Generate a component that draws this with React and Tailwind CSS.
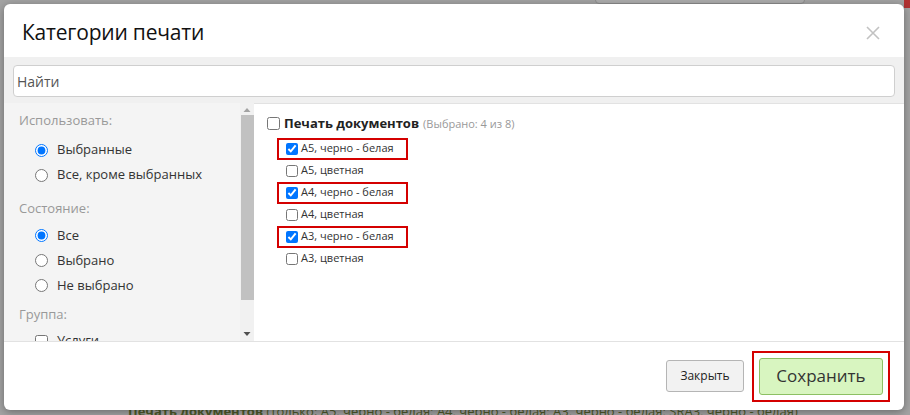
import React from "react";

const font = { fontFamily: '"Open Sans", "Noto Sans", sans-serif' };

function Radio({ checked, label }) {
  return (
    <label className="flex h-[25px] items-center gap-[9px] pl-[16px] text-[13px] text-[#333]">
      <input type="radio" defaultChecked={checked} className="m-0 h-[13px] w-[13px] accent-[#0075ff]" />
      <span>{label}</span>
    </label>
  );
}

function Item({ checked, label, marked }) {
  return (
    <div
      className={`flex h-[22px] w-[131px] items-center gap-[3px] text-[11px] text-[#333] ${
        marked ? "border-2 border-[#d40000] pl-[7px]" : "border-2 border-transparent pl-[7px]"
      }`}
    >
      <input type="checkbox" defaultChecked={checked} className="m-0 h-[12px] w-[12px] accent-[#0075ff]" />
      <span>{label}</span>
    </div>
  );
}

export default function App() {
  return (
    <div className="relative h-[415px] w-[910px] overflow-hidden bg-[#a3a3a3]" style={font}>
      {/* page behind the overlay */}
      <div className="absolute left-[595px] top-[-6px] h-[10px] w-[210px] rounded border border-[#8c8c8c] bg-[#adadad]" />
      <div className="absolute left-[904px] top-[0px] h-[8px] w-[6px] bg-[#b03030]" />
      <div className="absolute left-[128px] top-[402px] whitespace-nowrap text-[13px] text-[#4e5a2a]">
        <b>Печать документов</b> (только: A5, черно - белая; A4, черно - белая; A3, черно - белая; SRA3, черно - белая)
      </div>

      <div className="p-[4px] pr-[6px]">
        <div className="relative flex h-[406px] flex-col overflow-hidden rounded-[6px] bg-white shadow-[0_2px_8px_rgba(0,0,0,0.35)]">
          <div className="flex h-[53px] items-center justify-between pl-[18px] pr-[24px]">
            <h1 className="mt-[4px] text-[21px] font-normal text-[#111]" style={{ letterSpacing: "-0.2px" }}>
              Категории печати
            </h1>
            <svg width="14" height="14" viewBox="0 0 14 14" className="mt-[4px]">
              <path d="M1 1L13 13M13 1L1 13" stroke="#c2c2c2" strokeWidth="1.6" />
            </svg>
          </div>

          <div className="bg-[#f0f0f0] px-[9px] pb-[6px] pt-[8px]">
            <div className="flex h-[32px] items-center rounded-[4px] border border-[#cfcfcf] bg-white px-[3px] text-[14px] text-[#555]">
              Найти
            </div>
          </div>

          <div className="flex h-[239px] border-b border-[#e2e2e2]">
            <div className="flex w-[250px] bg-[#f4f4f4]">
              <div className="flex-1 overflow-hidden pl-[15px] pt-[8px]">
                <div className="mb-[7px] text-[13px] text-[#999]">Использовать:</div>
                <Radio checked label="Выбранные" />
                <Radio label="Все, кроме выбранных" />
                <div className="mb-[5px] mt-[11px] text-[13px] text-[#999]">Состояние:</div>
                <Radio checked label="Все" />
                <Radio label="Выбрано" />
                <Radio label="Не выбрано" />
                <div className="mb-[4px] mt-[7px] text-[13px] text-[#999]">Группа:</div>
                <label className="flex h-[25px] items-center gap-[9px] pl-[16px] text-[13px] text-[#333]">
                  <input type="checkbox" className="m-0 h-[13px] w-[13px]" />
                  <span>Услуги</span>
                </label>
              </div>
              <div className="flex w-[14px] flex-col items-center bg-[#f1f1f1]">
                <svg width="8" height="12" viewBox="0 0 8 12">
                  <path d="M4 5L7.5 9H0.5Z" fill="#a3a3a3" />
                </svg>
                <div className="h-[185px] w-[13px] bg-[#c1c1c1]" />
                <div className="flex-1" />
                <svg width="8" height="12" viewBox="0 0 8 12">
                  <path d="M0.5 3H7.5L4 7Z" fill="#505050" />
                </svg>
              </div>
            </div>

            <div className="flex-1 border-t border-[#e2e2e2] pl-[13px] pt-[10px]">
              <div className="flex items-center gap-[4px]">
                <input type="checkbox" className="m-0 h-[13px] w-[13px]" />
                <span className="text-[13px] font-bold text-[#222]">Печать документов</span>
                <span className="text-[11px] text-[#999]">(Выбрано: 4 из 8)</span>
              </div>
              <div className="mt-[4px] pl-[10px]">
                <Item checked marked label="А5, черно - белая" />
                <Item label="А5, цветная" />
                <Item checked marked label="А4, черно - белая" />
                <Item label="А4, цветная" />
                <Item checked marked label="А3, черно - белая" />
                <Item label="А3, цветная" />
              </div>
            </div>
          </div>

          <div className="flex flex-1 items-center justify-end gap-[8px] pr-[14px]">
            <button className="h-[32px] w-[78px] rounded-[3px] border border-[#b5b5b5] bg-[#f2f2f2] text-[12px] text-[#222]">
              Закрыть
            </button>
            <div className="border-2 border-[#d40000] p-[5px]">
              <button className="h-[37px] w-[124px] rounded-[3px] border border-[#8cc063] bg-[#d8f5c0] text-[17px] text-[#333]">
                Сохранить
              </button>
            </div>
          </div>
        </div>
      </div>
    </div>
  );
}
